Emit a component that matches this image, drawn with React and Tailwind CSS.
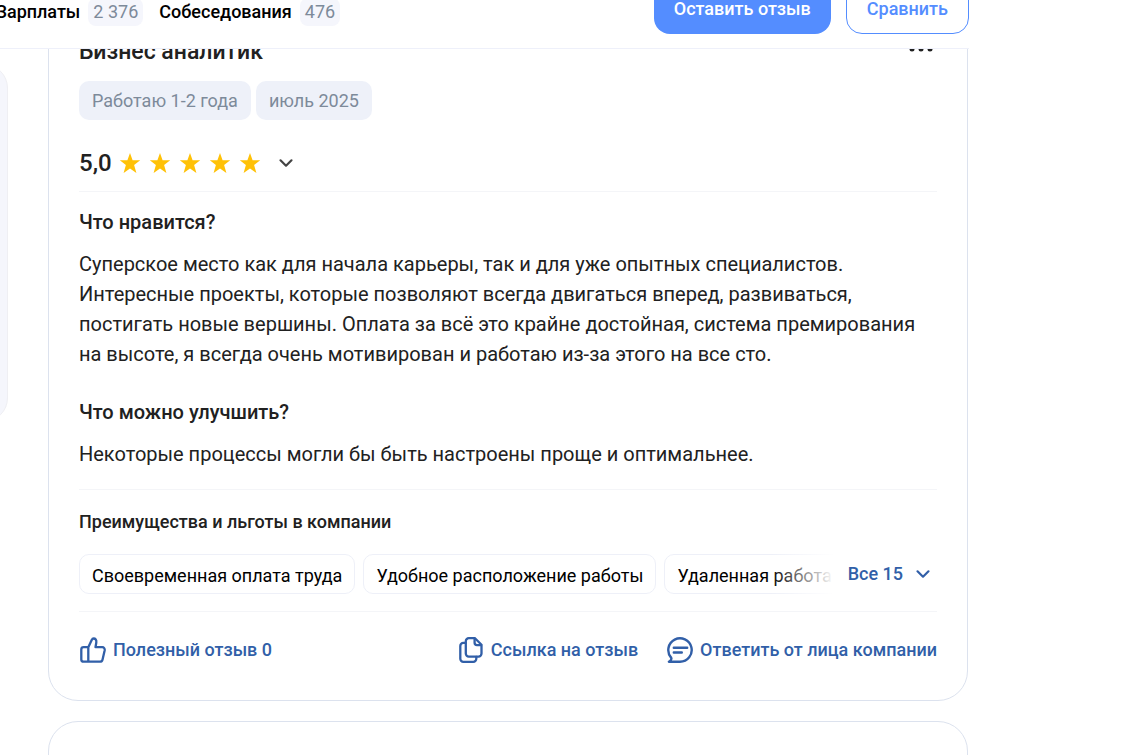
import React, { useState } from 'react';

const benefits = [
  'Своевременная оплата труда',
  'Удобное расположение работы',
  'Удаленная работа',
];

const Star = () => (
  <svg viewBox="0 0 24 24" className="w-6 h-6" fill="#ffc107">
    <path d="M12 2l2.6 7.3H22.2l-6.1 4.8 2.3 7.9L12 17.4 5.6 22l2.3-7.9-6.1-4.8h7.6z" />
  </svg>
);

const Chevron = () => (
  <svg viewBox="0 0 16 16" className="w-4 h-4" fill="none" stroke="currentColor" strokeWidth="2.2">
    <path strokeLinecap="round" strokeLinejoin="round" d="M2.5 5.3L8 10.7l5.5-5.4" />
  </svg>
);

const ThumbIcon = () => (
  <svg viewBox="0 0 28 28" className="w-7 h-7" fill="none" stroke="currentColor" strokeWidth="2.3" strokeLinejoin="round" strokeLinecap="round">
    <path d="M9.3 11.2H4.6a2.3 2.3 0 0 0-2.3 2.3V23.4a2.3 2.3 0 0 0 2.3 2.3H21a2.6 2.6 0 0 0 2.5-2l2.2-9.5a2.5 2.5 0 0 0-2.4-3H16.5l.8-4.7c.4-2.6-1-4-2.6-4-1.2 0-1.6.6-2 1.6L9.3 11.2v14.5" />
  </svg>
);

const CopyIcon = () => (
  <svg viewBox="0 0 28 28" className="w-7 h-7" fill="none" stroke="currentColor" strokeWidth="2.3" strokeLinejoin="round" strokeLinecap="round">
    <path d="M18 2.2h-6.2a3 3 0 0 0-3 3V17.6a3 3 0 0 0 3 3H21.5a3 3 0 0 0 3-3V8.7z" />
    <path d="M17.6 2.6v4.2a2.3 2.3 0 0 0 2.3 2.3h4.2" />
    <path d="M8.500 6.900H6.300a3 3 0 0 0-3 3V22.800a3 3 0 0 0 3 3H16.300a3 3 0 0 0 3-3V21" />
  </svg>
);

const ReplyIcon = () => (
  <svg viewBox="0 0 28 28" className="w-7 h-7" fill="none" stroke="currentColor" strokeWidth="2.4" strokeLinejoin="round" strokeLinecap="round">
    <path d="M14 25.700a11.700 11.700 0 1 0-8.900-4.100c.7 1.400 0 2.900-2.200 4.100z" />
    <path d="M7.800 11.700h13.400M7.800 16.500h8" />
  </svg>
);

const Header = () => (
  <header className="relative z-10 flex items-end justify-between h-[49px] bg-white border-b border-[#eef0fa]">
    <nav className="-ml-1 flex pb-5.5 text-lg leading-7 font-medium text-black">
      <a href="#salaries" className="flex items-center gap-2">
        Зарплаты
        <span className="px-[5px] rounded-lg bg-[#f5f6fc] font-normal text-[#7d8a9a]">2 376</span>
      </a>
      <a href="#interviews" className="ml-4 flex items-center gap-2">
        Собеседования
        <span className="px-[5px] rounded-lg bg-[#f5f6fc] font-normal text-[#7d8a9a]">476</span>
      </a>
    </nav>
    <div className="flex gap-[15px] pb-3.5 text-lg font-medium">
      <button className="h-[50px] px-5 rounded-2xl bg-[#548dff] text-white">Оставить отзыв</button>
      <button className="h-[50px] px-5 rounded-2xl border border-[#548dff] text-[#548dff]">Сравнить</button>
    </div>
  </header>
);

const Review = () => {
  const [likes, setLikes] = useState(0);

  return (
    <article className="-mt-4 px-[30px] pb-9 border border-[#dce2ee] rounded-b-[30px]">
      <div className="flex justify-between items-start">
        <h2 className="text-[23px] leading-9 font-medium">Бизнес аналитик</h2>
        <button aria-label="Меню" className="mt-3 pr-1">
          <svg viewBox="0 0 24 6" className="w-6 h-1.5" fill="currentColor">
            <circle cx="3" cy="3" r="2.5" />
            <circle cx="12" cy="3" r="2.5" />
            <circle cx="21" cy="3" r="2.5" />
          </svg>
        </button>
      </div>

      <div className="mt-[11px] flex gap-[5px] text-lg text-[#7d8a9a]">
        <span className="h-[39px] px-[13px] rounded-[10px] bg-[#eef1f9] leading-10">Работаю 1-2 года</span>
        <span className="h-[39px] px-[13px] rounded-[10px] bg-[#eef1f9] leading-10">июль 2025</span>
      </div>

      <div className="mt-7 flex items-center">
        <span className="text-2xl leading-[30px] font-medium">5,0</span>
        <div className="ml-1.5 flex gap-1.5">
          <Star />
          <Star />
          <Star />
          <Star />
          <Star />
        </div>
        <button aria-label="Показать оценки" className="ml-4 text-[#444]">
          <Chevron />
        </button>
      </div>

      <section className="mt-[13px] pt-[15px] border-t border-[#f4f5f8] text-xl leading-[30px]">
        <h3 className="font-medium">Что нравится?</h3>
        <p className="mt-3">
          Суперское место как для начала карьеры, так и для уже опытных специалистов.
          Интересные проекты, которые позволяют всегда двигаться вперед, развиваться,
          постигать новые вершины. Оплата за всё это крайне достойная, система премирования
          на высоте, я всегда очень мотивирован и работаю из-за этого на все сто.
        </p>
        <h3 className="mt-7 font-medium">Что можно улучшить?</h3>
        <p className="mt-3">Некоторые процессы могли бы быть настроены проще и оптимальнее.</p>
      </section>

      <section className="mt-5 pt-4 border-t border-[#f4f5f8] text-lg">
        <h4 className="leading-8 font-medium">Преимущества и льготы в компании</h4>
        <div className="mt-4 flex">
          <div className="relative flex-1 min-w-0 overflow-hidden">
            <ul className="flex gap-2">
              {benefits.map((item) => (
                <li key={item} className="shrink-0 h-10 px-3 border border-[#eef0f8] rounded-[10px] leading-[42px] text-black">
                  {item}
                </li>
              ))}
            </ul>
            <div className="absolute inset-y-0 right-0 w-16 bg-linear-to-r from-white/0 to-white" />
          </div>
          <button className="flex items-center gap-3 pl-3.5 pr-1.5 font-medium text-[#315fa8]">
            Все 15
            <Chevron />
          </button>
        </div>
      </section>

      <footer className="mt-[17px] pt-6 border-t border-[#f4f5f8] flex justify-between text-lg leading-7 font-medium text-[#315fa8]">
        <button className="flex items-center gap-1.5" onClick={() => setLikes(likes ? 0 : 1)}>
          <ThumbIcon />
          Полезный отзыв {likes}
        </button>
        <div className="flex gap-7">
          <button className="flex items-center gap-1.5">
            <CopyIcon />
            Ссылка на отзыв
          </button>
          <button className="flex items-center gap-1.5">
            <ReplyIcon />
            Ответить от лица компании
          </button>
        </div>
      </footer>
    </article>
  );
};

const App = () => {
  return (
    <div className="h-screen overflow-hidden bg-white font-['Roboto',sans-serif] text-[#212121]">
      <div className="max-w-[969px]">
        <Header />
        <div className="flex gap-10 pr-px">
          <aside className="w-2 shrink-0 mt-[15px] h-[358px] flex justify-end">
            <div className="w-72 shrink-0 rounded-3xl bg-[#f5f6fc] border border-[#efeff3]" />
          </aside>
          <main className="flex-1 min-w-0">
            <Review />
            <article className="mt-5 h-60 border border-[#dce2ee] rounded-[30px]" />
          </main>
        </div>
      </div>
    </div>
  );
};

export default App;
